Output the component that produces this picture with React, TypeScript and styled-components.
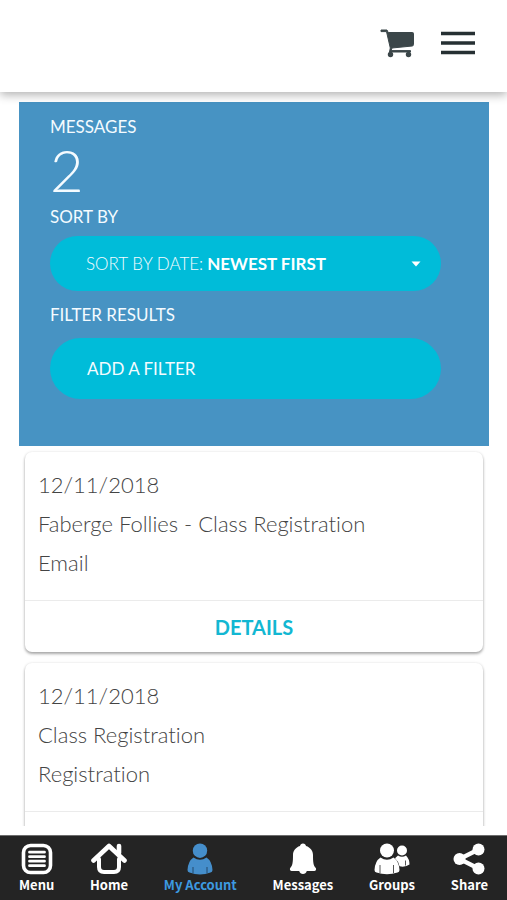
import React, { useState } from "react";
import styled, { createGlobalStyle } from "styled-components";

const GlobalStyle = createGlobalStyle`
  * { box-sizing: border-box; }
  body {
    margin: 0;
    background: #fff;
    font-family: "Lato", "Liberation Sans", sans-serif;
    font-variant-ligatures: none;
  }
  button, select { font: inherit; }
`;

const Screen = styled.div`
  display: flex;
  flex-direction: column;
  height: 100vh;
  overflow: hidden;
`;

const Header = styled.header`
  position: relative;
  z-index: 1;
  flex: none;
  display: flex;
  justify-content: flex-end;
  align-items: center;
  gap: 26px;
  padding: 28px 32px 34px;
  background: #fff;
  box-shadow: 0 3px 9px rgba(0, 0, 0, 0.3);
`;

const IconButton = styled.button`
  display: flex;
  padding: 0;
  border: 0;
  background: none;
  color: #2c3639;
  cursor: pointer;
`;

const Content = styled.main`
  flex: 1;
  min-height: 0;
  margin-bottom: 9px;
  padding: 10px 18px 0 19px;
  overflow-y: auto;
  scrollbar-width: none;
`;

const Panel = styled.section`
  padding: 13px 48px 47px 31px;
  background: #4793c3;
  color: #f4fbff;
`;

const PanelLabel = styled.h2`
  margin: 0;
  font-size: 17px;
  font-weight: 400;
  line-height: 24px;
`;

const Count = styled.p`
  margin: 0 0 4px;
  font-size: 58px;
  font-weight: 300;
  line-height: 62px;
`;

const SortPill = styled.label`
  display: flex;
  align-items: center;
  gap: 4px;
  height: 55px;
  margin: 7px 0 12px;
  padding: 0 20px 0 36px;
  border-radius: 28px;
  background: #00bcd9;
  font-size: 17px;
  font-weight: 300;
  white-space: nowrap;
`;

const SortSelect = styled.select`
  flex: 1;
  min-width: 0;
  padding: 0;
  border: 0;
  appearance: none;
  background: none;
  color: #fff;
  font-weight: 700;
  cursor: pointer;
`;

const FilterButton = styled.button`
  display: block;
  width: 100%;
  height: 61px;
  margin-top: 11px;
  padding: 0 37px;
  border: 0;
  border-radius: 31px;
  background: #00bcd9;
  color: #f4fbff;
  font-size: 17px;
  text-align: left;
  cursor: pointer;
`;

const CardList = styled.div`
  display: flex;
  flex-direction: column;
  gap: 11px;
  padding: 6px;
`;

const Card = styled.article`
  border-radius: 7px;
  background: #fff;
  box-shadow: 0 2px 3px rgba(0, 0, 0, 0.32), 0 0 3px rgba(0, 0, 0, 0.1);
`;

const CardBody = styled.div`
  padding: 13px 13px 18px;
  border-bottom: 1px solid #ebebeb;
`;

const CardLine = styled.p`
  margin: 0;
  color: #444;
  font-size: 22px;
  font-weight: 300;
  line-height: 39px;
`;

const DetailsButton = styled.button`
  display: block;
  width: 100%;
  height: 51px;
  padding: 0;
  border: 0;
  background: none;
  color: #12b7d2;
  font-size: 20px;
  font-weight: 700;
  cursor: pointer;
`;

const TabBar = styled.nav`
  flex: none;
  display: flex;
  justify-content: space-between;
  padding: 6px 19px;
  border-top: 1px solid #6d6d6d;
  background: #242424;
`;

const Tab = styled.a<{ $active?: boolean }>`
  display: flex;
  flex-direction: column;
  align-items: center;
  color: ${(p) => (p.$active ? "#3d9ae0" : "#fff")};
  font-family: "Noto Sans CJK SC", "Noto Sans", sans-serif;
  font-size: 13px;
  font-weight: 700;
  line-height: 18px;
  text-decoration: none;
  white-space: nowrap;
`;

const CartIcon = () => (
  <svg width="35" height="30" viewBox="0 0 35 30" aria-hidden="true">
    <path d="M1 2h6l1.2 2.5h24.3a1 1 0 0 1 1 1v11a1.5 1.5 0 0 1-1.3 1.5L12 20l-1 2.600h19.500V24H9.500l.8-4L6.500 3.600H1z" fill="#3b4649" stroke="#3b4649" strokeWidth="1" strokeLinejoin="round" />
    <circle cx="10.500" cy="26.500" r="2.700" fill="#3b4649" />
    <circle cx="28.500" cy="26.500" r="2.700" fill="#3b4649" />
  </svg>
);

const BarsIcon = () => (
  <svg width="34" height="24" viewBox="0 0 34 24" aria-hidden="true">
    <path d="M0 2.500h34M0 12h34M0 21.500h34" stroke="#263033" strokeWidth="3.600" />
  </svg>
);

const CaretIcon = () => (
  <svg width="10" height="6" viewBox="0 0 10 6" aria-hidden="true">
    <path d="M.5.5h9L5 5.500z" fill="#fff" />
  </svg>
);

const MenuIcon = () => (
  <svg width="32" height="34" viewBox="0 0 32 34" aria-hidden="true">
    <rect x="2.500" y="3.500" width="27" height="27" rx="7" fill="none" stroke="#fff" strokeWidth="3.600" />
    <path d="M8.500 10.200h15M8.500 14.700h15M8.500 19.200h15M8.500 23.700h15" stroke="#fff" strokeWidth="2.800" strokeLinecap="round" />
  </svg>
);

const HomeIcon = () => (
  <svg width="36" height="34" viewBox="0 0 36 34" aria-hidden="true">
    <path d="M2.500 18.500 18 4l15.500 14.500" fill="none" stroke="#fff" strokeWidth="4.600" strokeLinecap="round" strokeLinejoin="round" />
    <path d="M28 11V4" stroke="#fff" strokeWidth="4.600" strokeLinecap="round" />
    <path d="M8 17v8q0 5 5 5h10q5 0 5-5v-8" fill="none" stroke="#fff" strokeWidth="4" strokeLinecap="round" />
  </svg>
);

const AccountIcon = () => (
  <svg width="28" height="34" viewBox="0 0 28 34" aria-hidden="true">
    <circle cx="14" cy="8.700" r="7.200" fill="#458ecb" />
    <path d="M7.500 15.500q6.500 4.500 13 0Q26 19 26.500 28q0 2-2 2.500Q14 34.500 3.500 30.500q-2-.5-2-2.500 .5-9 6-12.500z" fill="#458ecb" />
    <path d="M7 25v6.200M21 25v6.200" stroke="#24496a" strokeWidth="1" />
  </svg>
);

const BellIcon = () => (
  <svg width="28" height="34" viewBox="0 0 28 34" aria-hidden="true">
    <path d="M14 1.500c1.700 0 2.700 1 3 2.600C21.500 5.500 24 9 24 13c0 7 .3 10.500 2.800 13 .8 1.500 0 3-1.500 3h-7.500c-.5 2-2 3-3.800 3s-3.300-1-3.800-3H2.700c-1.500 0-2.300-1.500-1.500-3C3.700 23.500 4 20 4 13c0-4 2.500-7.500 7-8.900.3-1.600 1.300-2.600 3-2.600z" fill="#fff" />
  </svg>
);

const GroupsIcon = () => (
  <svg width="36" height="34" viewBox="0 0 36 34" aria-hidden="true">
    <circle cx="28" cy="8.500" r="5" fill="#fff" />
    <path d="M24 13.500q4 2.500 8 0 3.500 3.500 3.500 9-4 3-10 1.800-1-5-4.500-8z" fill="#fff" />
    <path d="M31.500 18.500v5" stroke="#555" strokeWidth="1" />
    <circle cx="13" cy="8.500" r="7" fill="#fff" />
    <path d="M6.500 15.500q6.500 4.500 13 0Q25 19 25.500 28q0 2-2 2.500-10.500 3.500-21 0-2-.5-2-2.500 .5-9 6-12.500z" fill="#fff" />
    <path d="M6 23v8M19.500 23v8" stroke="#555" strokeWidth="1" />
  </svg>
);

const ShareIcon = () => (
  <svg width="34" height="34" viewBox="0 0 34 34" aria-hidden="true">
    <path d="M26.500 7.500 7.500 17l19 9.500" fill="none" stroke="#fff" strokeWidth="4.200" />
    <circle cx="26.500" cy="7.500" r="6" fill="#fff" />
    <circle cx="7.500" cy="17" r="6" fill="#fff" />
    <circle cx="26.500" cy="26.500" r="6" fill="#fff" />
  </svg>
);

const messages = [
  { date: "12/11/2018", subject: "Faberge Follies - Class Registration", kind: "Email" },
  { date: "12/11/2018", subject: "Class Registration", kind: "Registration" },
];

const tabs = [
  { label: "Menu", Icon: MenuIcon },
  { label: "Home", Icon: HomeIcon },
  { label: "My Account", Icon: AccountIcon, active: true },
  { label: "Messages", Icon: BellIcon },
  { label: "Groups", Icon: GroupsIcon },
  { label: "Share", Icon: ShareIcon },
];

export default function App() {
  const [sort, setSort] = useState("newest");
  return (
    <Screen>
      <GlobalStyle />
      <Header>
        <IconButton type="button" aria-label="Cart"><CartIcon /></IconButton>
        <IconButton type="button" aria-label="Open menu"><BarsIcon /></IconButton>
      </Header>
      <Content>
        <Panel>
          <PanelLabel>MESSAGES</PanelLabel>
          <Count>{messages.length}</Count>
          <PanelLabel>SORT BY</PanelLabel>
          <SortPill htmlFor="sort">
            <span>SORT BY DATE:</span>
            <SortSelect id="sort" value={sort} onChange={(e) => setSort(e.target.value)}>
              <option value="newest">NEWEST FIRST</option>
            </SortSelect>
            <CaretIcon />
          </SortPill>
          <PanelLabel>FILTER RESULTS</PanelLabel>
          <FilterButton type="button">ADD A FILTER</FilterButton>
        </Panel>
        <CardList>
          {messages.map((m) => (
            <Card key={m.subject}>
              <CardBody>
                <CardLine>{m.date}</CardLine>
                <CardLine>{m.subject}</CardLine>
                <CardLine>{m.kind}</CardLine>
              </CardBody>
              <DetailsButton type="button">DETAILS</DetailsButton>
            </Card>
          ))}
        </CardList>
      </Content>
      <TabBar>
        {tabs.map(({ label, Icon, active }) => (
          <Tab key={label} href="#" $active={active} aria-current={active ? "page" : undefined}>
            <Icon />
            {label}
          </Tab>
        ))}
      </TabBar>
    </Screen>
  );
}
